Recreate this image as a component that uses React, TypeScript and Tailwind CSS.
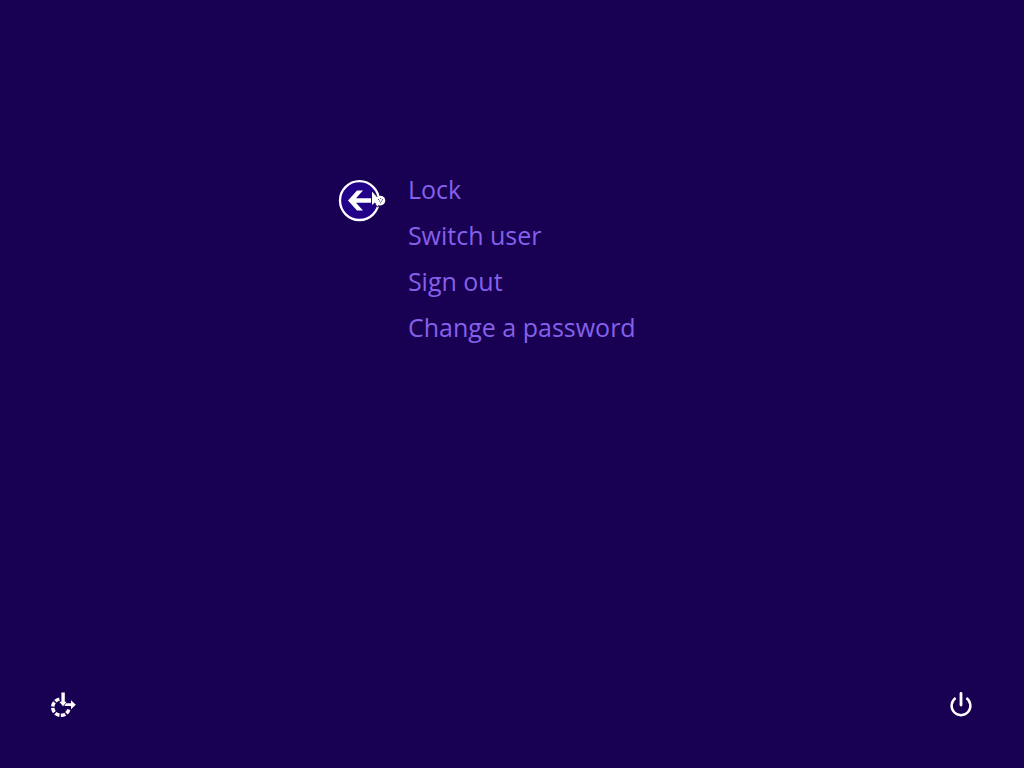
const OPTIONS = ['Lock', 'Switch user', 'Sign out', 'Change a password']

const BackIcon = () => (
  <svg viewBox="0 0 42 42" className="size-[42px]" aria-hidden="true">
    <circle cx="21.4" cy="20.6" r="19.4" fill="#22008a" stroke="#ffffff" strokeWidth="2.3" />
    <path d="M10 20.5L19 10.5H25L18 18.3H34V22.7H18L25 30.5H19Z" fill="#ffffff" />
  </svg>
)

// Arrow pointer with the small busy ball beside it
const BusyPointer = () => (
  <svg viewBox="0 0 16 20" className="absolute left-8 top-2.5 h-5 w-4" aria-hidden="true">
    <path d="M1.5 0.5V16L4.8 13L7 17L9 16L7.5 12H12Z" fill="#ffffff" stroke="#14003c" strokeWidth="0.9" />
    <circle cx="10.4" cy="10.6" r="4.9" fill="#ffffff" />
    <path
      d="M8 9.5h1M10.2 8.5h1M12 9.7h1M9 11h1M11 11.2h1M10 12.8h1"
      stroke="#3b2860"
      strokeWidth="0.9"
    />
  </svg>
)

const EaseOfAccessIcon = () => (
  <svg viewBox="0 0 28 28" className="size-7" fill="none" aria-hidden="true">
    <path
      d="M10.4 8.1A8.2 8.2 0 1 0 20 17.6"
      stroke="#ffffff"
      strokeWidth="3.5"
      strokeDasharray="4.6 1.4"
    />
    <path d="M12.4 1.5H15.8V10.8H17.6L14.1 15.2L10.2 10.8H12.4Z" fill="#ffffff" />
    <path d="M17 12.2H22V9.2L26.8 13.7L22 18.2V15H15.4Z" fill="#ffffff" />
  </svg>
)

const PowerIcon = () => (
  <svg viewBox="0 0 28 28" className="size-7" fill="none" stroke="#ffffff" aria-hidden="true">
    <path d="M8.6 7.1A9.4 9.4 0 1 0 19.4 7.1" strokeWidth="2.4" />
    <path d="M14 2.5V14" strokeWidth="2.8" strokeLinecap="round" />
  </svg>
)

export default function App() {
  return (
    <div className="flex min-h-screen flex-col justify-between bg-[#180052] font-['Open_Sans','Noto_Sans',sans-serif]">
      <main className="flex items-start gap-7 pl-[33%] pt-[168px]">
        <button type="button" aria-label="Back" className="relative mt-3 shrink-0 rounded-full">
          <BackIcon />
          <BusyPointer />
        </button>
        <ul>
          {OPTIONS.map((label) => (
            <li key={label} className="h-[46px]">
              <button type="button" className="block text-left text-[25px] font-normal leading-[42px] text-[#8560ea] hover:text-white">
                {label}
              </button>
            </li>
          ))}
        </ul>
      </main>

      <footer className="flex items-center justify-between px-[49px] pb-[49px]">
        <button type="button" aria-label="Ease of access">
          <EaseOfAccessIcon />
        </button>
        <button type="button" aria-label="Shut down">
          <PowerIcon />
        </button>
      </footer>
    </div>
  )
}
